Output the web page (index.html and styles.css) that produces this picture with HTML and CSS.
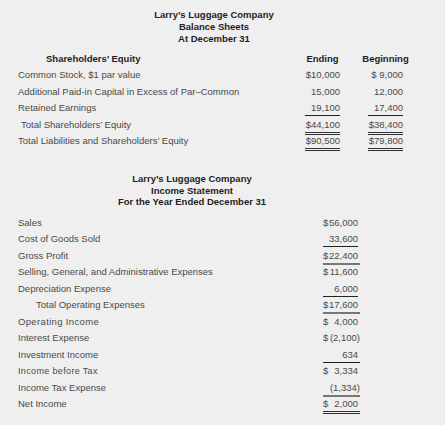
FILE: index.html
```html
<!DOCTYPE html>
<html>
<head>
<meta charset="utf-8">
<link rel="stylesheet" href="styles.css">
</head>
<body>
<div class="page">
  <section class="bs">
    <div class="title bs-title">
      <div>Larry’s Luggage Company</div>
      <div>Balance Sheets</div>
      <div>At December 31</div>
    </div>
    <div class="bs-row head">
      <div class="label head-label">Shareholders’ Equity</div>
      <div class="num c1 center"><span>Ending</span></div>
      <div class="num c2 center"><span>Beginning</span></div>
    </div>
    <div class="bs-row">
      <div class="label">Common Stock, $1 par value</div>
      <div class="num c1">$10,000</div>
      <div class="num c2">$ 9,000</div>
    </div>
    <div class="bs-row">
      <div class="label">Additional Paid-in Capital in Excess of Par–Common</div>
      <div class="num c1">15,000</div>
      <div class="num c2">12,000</div>
    </div>
    <div class="bs-row">
      <div class="label">Retained Earnings</div>
      <div class="num c1 u">19,100</div>
      <div class="num c2 u">17,400</div>
    </div>
    <div class="bs-row">
      <div class="label ind1">Total Shareholders’ Equity</div>
      <div class="num c1 uu">$44,100</div>
      <div class="num c2 uu">$38,400</div>
    </div>
    <div class="bs-row">
      <div class="label">Total Liabilities and Shareholders’ Equity</div>
      <div class="num c1 uu">$90,500</div>
      <div class="num c2 uu">$79,800</div>
    </div>
  </section>

  <section class="is">
    <div class="title is-title">
      <div>Larry’s Luggage Company</div>
      <div>Income Statement</div>
      <div>For the Year Ended December 31</div>
    </div>
    <div class="is-row">
      <div class="label">Sales</div>
      <div class="amt"><span>$</span><span>56,000</span></div>
    </div>
    <div class="is-row">
      <div class="label">Cost of Goods Sold</div>
      <div class="amt u"><span></span><span>33,600</span></div>
    </div>
    <div class="is-row">
      <div class="label">Gross Profit</div>
      <div class="amt ug"><span>$</span><span>22,400</span></div>
    </div>
    <div class="is-row">
      <div class="label">Selling, General, and Administrative Expenses</div>
      <div class="amt"><span>$</span><span>11,600</span></div>
    </div>
    <div class="is-row">
      <div class="label">Depreciation Expense</div>
      <div class="amt u"><span></span><span>6,000</span></div>
    </div>
    <div class="is-row">
      <div class="label ind2">Total Operating Expenses</div>
      <div class="amt ug"><span>$</span><span>17,600</span></div>
    </div>
    <div class="is-row">
      <div class="label wide">Operating Income</div>
      <div class="amt"><span>$</span><span>4,000</span></div>
    </div>
    <div class="is-row">
      <div class="label">Interest Expense</div>
      <div class="amt neg"><span>$</span><span>(2,100)</span></div>
    </div>
    <div class="is-row">
      <div class="label">Investment Income</div>
      <div class="amt u wideline"><span></span><span>634</span></div>
    </div>
    <div class="is-row">
      <div class="label wide small">Income before Tax</div>
      <div class="amt"><span>$</span><span>3,334</span></div>
    </div>
    <div class="is-row">
      <div class="label">Income Tax Expense</div>
      <div class="amt ug neg"><span></span><span>(1,334)</span></div>
    </div>
    <div class="is-row">
      <div class="label">Net Income</div>
      <div class="amt uu wideline"><span>$</span><span>2,000</span></div>
    </div>
  </section>
</div>
</body>
</html>
```

FILE: styles.css
```css
html, body {
  margin: 0;
  padding: 0;
  background: #efefef;
}

.page {
  width: 445px;
  height: 425px;
  font-family: "Liberation Sans", Arial, sans-serif;
  font-size: 9.5px;
  color: #4a4a4a;
  padding-top: 9px;
  box-sizing: border-box;
}

.title {
  font-weight: bold;
  color: #1e1e1e;
  line-height: 11.75px;
  text-align: center;
}

.bs-title {
  width: 428px;
}

.is-title {
  width: 384px;
  margin-top: 23.5px;
  margin-bottom: 6.5px;
}

.bs-row {
  display: grid;
  grid-template-columns: 287px 35px 28px 35px;
  height: 16.5px;
  padding-left: 18px;
}

.bs-row .c1 { grid-column: 2; }
.bs-row .c2 { grid-column: 4; }

.bs-row.head {
  margin-top: 6px;
  font-weight: bold;
  color: #1e1e1e;
}

.head-label {
  padding-left: 28px;
}

.label {
  grid-column: 1;
  padding-top: 1.25px;
  line-height: 14px;
  white-space: nowrap;
}

.ind1 { padding-left: 3px; }
.ind2 { padding-left: 18px; }

.wide { letter-spacing: 0.35px; }
.small { font-size: 9px; }

.num {
  padding-top: 1.25px;
  line-height: 14px;
  height: 14px;
  text-align: right;
  white-space: nowrap;
}

.center {
  display: flex;
  justify-content: center;
}

.is-row {
  display: grid;
  grid-template-columns: 305px 37px;
  height: 16.5px;
  padding-left: 18px;
}

.amt {
  grid-column: 2;
  display: flex;
  justify-content: space-between;
  padding-top: 1.25px;
  padding-right: 2px;
  line-height: 14px;
  height: 14px;
  white-space: nowrap;
  box-sizing: content-box;
}

.amt.neg {
  padding-right: 0;
}

.u {
  border-bottom: 1px solid #222;
}

.uu {
  border-bottom: 3px double #333;
}

.ug {
  border-bottom: 2px solid #777;
}

.is-row .amt.u {
  width: 35px;
  padding-right: 0;
}

.is-row .amt.u.wideline {
  width: 35px;
  padding-right: 2px;
}
```
